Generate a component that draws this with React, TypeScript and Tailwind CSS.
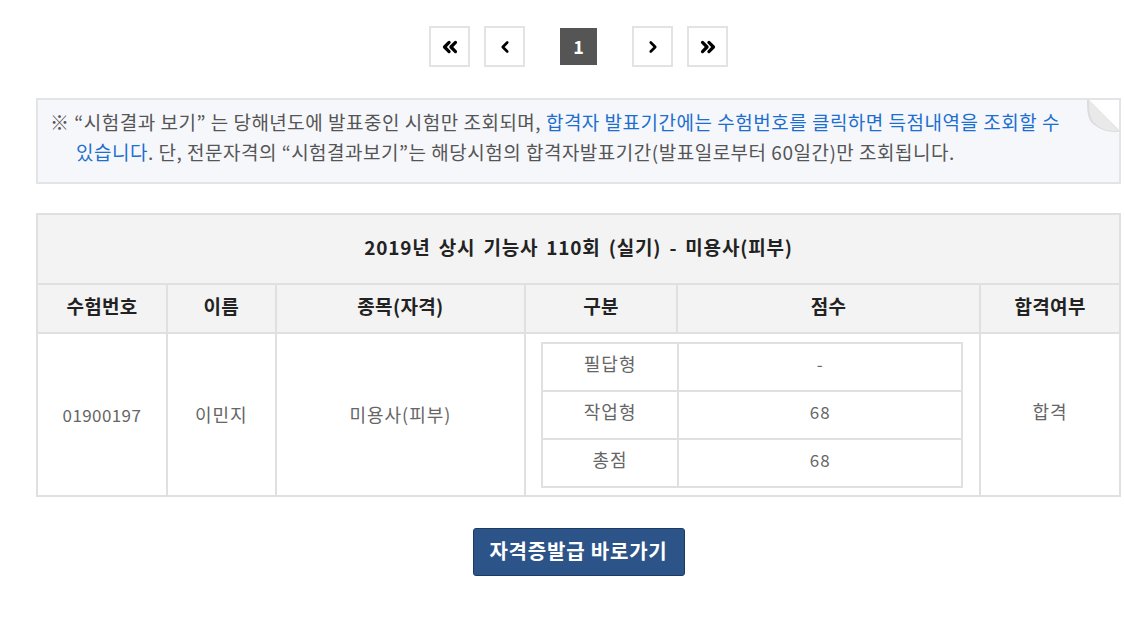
import { ChevronLeft, ChevronRight, ChevronsLeft, ChevronsRight } from 'lucide-react';

const font = { fontFamily: '"Noto Sans CJK KR", "Noto Sans", sans-serif' };

function PageButton({ children }: { children: React.ReactNode }) {
  return (
    <button className="flex h-[41px] w-[41px] items-center justify-center border-2 border-[#e3e3e3] bg-white text-black">
      {children}
    </button>
  );
}

export default function App() {
  return (
    <div
      className="min-h-[625px] w-[1124px] bg-white pl-[36px] pr-[3px] pt-[26px] text-[#555]"
      style={font}
    >
      {/* Pagination */}
      <div className="flex items-center justify-center">
        <PageButton>
          <ChevronsLeft size={22} strokeWidth={3.5} />
        </PageButton>
        <div className="ml-[14px]">
          <PageButton>
            <ChevronLeft size={18} strokeWidth={3.5} />
          </PageButton>
        </div>
        <div className="mx-[35px] flex h-[37px] w-[37px] items-center justify-center bg-[#555] text-[18px] font-bold text-white">
          1
        </div>
        <PageButton>
          <ChevronRight size={18} strokeWidth={3.5} />
        </PageButton>
        <div className="ml-[14px]">
          <PageButton>
            <ChevronsRight size={22} strokeWidth={3.5} />
          </PageButton>
        </div>
      </div>

      {/* Notice */}
      <div className="relative mt-[31px] h-[86px] overflow-hidden border-2 border-[#e2e4e8] bg-[#f6f7fb] pl-[12px] pt-[7px] text-[19px] leading-[30px] tracking-[0.5px] whitespace-nowrap">
        <p className="pl-[26px] -indent-[26px]">
          ※ “시험결과 보기” 는 당해년도에 발표중인 시험만 조회되며,{' '}
          <span className="text-[#1c6fcf]">합격자 발표기간에는 수험번호를 클릭하면 득점내역을 조회할 수</span>
          <br />
          <span className="text-[#1c6fcf]">있습니다</span>. 단, 전문자격의 “시험결과보기”는 해당시험의 합격자발표기간(발표일로부터 60일간)만 조회됩니다.
        </p>
        <svg className="absolute -right-[2px] -top-[2px]" width="36" height="38" viewBox="0 0 36 38">
          <path d="M0 0 H36 V38 Z" fill="#ffffff" />
          <path d="M2 0 L36 34 L30 34 C20 34 12 30 6 24 C2 18 2 10 2 0 Z" fill="#dcdcdc" />
          <path d="M4 2 L34 33 L28 33 C18 32 11 28 7 22 C4 16 4 9 4 2 Z" fill="#e9e9e9" />
        </svg>
      </div>

      {/* Result table */}
      <table className="mt-[29px] w-[1085px] border-collapse text-center text-[18px] tracking-[1px]">
        <colgroup>
          <col className="w-[130px]" />
          <col className="w-[109px]" />
          <col className="w-[250px]" />
          <col className="w-[152px]" />
          <col className="w-[304px]" />
          <col className="w-[140px]" />
        </colgroup>
        <thead>
          <tr className="h-[70px] bg-[#f3f3f3]">
            <th colSpan={6} className="border-2 border-[#e0e0e0] pb-[3px] text-[19px] font-bold text-[#222] tracking-[0.8px] [word-spacing:3px]">
              2019년 상시 기능사 110회 (실기) - 미용사(피부)
            </th>
          </tr>
          <tr className="h-[49px] bg-[#f3f3f3] text-[19px] font-bold tracking-[0.3px] text-[#222]">
            <th className="border-2 border-[#e0e0e0] pb-[4px]">수험번호</th>
            <th className="border-2 border-[#e0e0e0] pb-[4px]">이름</th>
            <th className="border-2 border-[#e0e0e0] pb-[4px]">종목(자격)</th>
            <th className="border-2 border-[#e0e0e0] pb-[4px]">구분</th>
            <th className="border-2 border-[#e0e0e0] pb-[4px]">점수</th>
            <th className="border-2 border-[#e0e0e0] pb-[4px]">합격여부</th>
          </tr>
        </thead>
        <tbody>
          <tr className="h-[163px] text-[#666]">
            <td className="border-2 border-[#e0e0e0] text-[17px] tracking-[0.4px]">01900197</td>
            <td className="border-2 border-[#e0e0e0]">이민지</td>
            <td className="border-2 border-[#e0e0e0]">미용사(피부)</td>
            <td colSpan={2} className="border-2 border-[#e0e0e0] pl-[15px] pr-[16px]">
              <table className="w-full border-collapse">
                <colgroup>
                  <col className="w-[136px]" />
                  <col />
                </colgroup>
                <tbody>
                  {[
                    ['필답형', '-'],
                    ['작업형', '68'],
                    ['총점', '68']
                  ].map(([label, score]) => (
                    <tr key={label} className="h-[48px]">
                      <td className="border-2 border-[#e0e0e0] pb-[6px]">{label}</td>
                      <td className="border-2 border-[#e0e0e0] pb-[6px] text-[17px]">{score}</td>
                    </tr>
                  ))}
                </tbody>
              </table>
            </td>
            <td className="border-2 border-[#e0e0e0] pb-[6px]">합격</td>
          </tr>
        </tbody>
      </table>

      {/* Certificate button */}
      <div className="mt-[31px] flex justify-center">
        <button className="h-[48px] w-[212px] rounded-[3px] border border-[#1b3a64] bg-[#2c5489] pb-[3px] text-[20px] font-bold tracking-[0.8px] text-white">
          자격증발급 바로가기
        </button>
      </div>
    </div>
  );
}
